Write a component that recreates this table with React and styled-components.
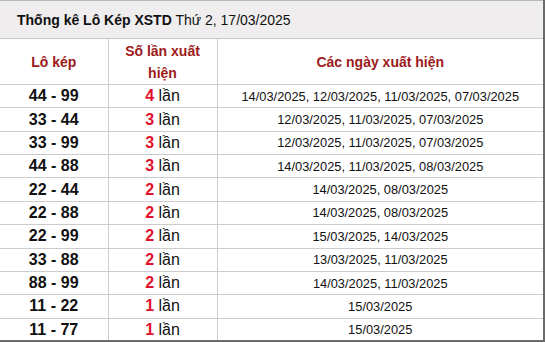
import React from "react";
import styled, { createGlobalStyle } from "styled-components";

const rows = [
	{ pair: "44 - 99", count: 4, dates: ["14/03/2025", "12/03/2025", "11/03/2025", "07/03/2025"] },
	{ pair: "33 - 44", count: 3, dates: ["12/03/2025", "11/03/2025", "07/03/2025"] },
	{ pair: "33 - 99", count: 3, dates: ["12/03/2025", "11/03/2025", "07/03/2025"] },
	{ pair: "44 - 88", count: 3, dates: ["14/03/2025", "11/03/2025", "08/03/2025"] },
	{ pair: "22 - 44", count: 2, dates: ["14/03/2025", "08/03/2025"] },
	{ pair: "22 - 88", count: 2, dates: ["14/03/2025", "08/03/2025"] },
	{ pair: "22 - 99", count: 2, dates: ["15/03/2025", "14/03/2025"] },
	{ pair: "33 - 88", count: 2, dates: ["13/03/2025", "11/03/2025"] },
	{ pair: "88 - 99", count: 2, dates: ["14/03/2025", "11/03/2025"] },
	{ pair: "11 - 22", count: 1, dates: ["15/03/2025"] },
	{ pair: "11 - 77", count: 1, dates: ["15/03/2025"] },
];

const App = () => {
	return (
		<>
			<GlobalStyle />
			<Wrapper>
				<Table>
					<colgroup>
						<col style={{ width: 108 }} />
						<col style={{ width: 109 }} />
						<col />
					</colgroup>
					<thead>
						<tr>
							<Caption colSpan={3}>
								<b>Thống kê Lô Kép XSTD</b> Thứ 2, 17/03/2025
							</Caption>
						</tr>
						<tr>
							<HeadCell>Lô kép</HeadCell>
							<HeadCell>Số lần xuất hiện</HeadCell>
							<HeadCell>Các ngày xuất hiện</HeadCell>
						</tr>
					</thead>
					<tbody>
						{rows.map(r => (
							<Row key={r.pair}>
								<PairCell>{r.pair}</PairCell>
								<CountCell>
									<Count>{r.count}</Count> lần
								</CountCell>
								<DateCell>{r.dates.join(", ")}</DateCell>
							</Row>
						))}
					</tbody>
				</Table>
			</Wrapper>
		</>
	);
};

export default App;

const GlobalStyle = createGlobalStyle`
	body {
		margin: 0;
		background: #fff;
		font-family: "Liberation Sans", Arial, sans-serif;
	}
`;

const Wrapper = styled.div`
	width: 545px;
	height: 343px;
	overflow: hidden;
`;

const Table = styled.table`
	width: 545px;
	border-collapse: collapse;
	table-layout: fixed;
	border-right: 2px solid #6b6b6b;
	border-bottom: 2px solid #6b6b6b;
	color: #111;
`;

const Caption = styled.th`
	height: 37px;
	padding: 0 0 0 17px;
	text-align: left;
	background: #efeded;
	border-top: 1px solid #b8b8b8;
	border-bottom: 1px solid #c8c8c8;
	font-size: 14px;
	font-weight: normal;
	color: #111;

	b {
		font-weight: bold;
	}
`;

const HeadCell = styled.th`
	height: 45px;
	padding: 0 6px;
	border: 1px solid #cccccc;
	border-left: none;
	font-size: 14px;
	line-height: 22px;
	font-weight: bold;
	color: #9c1a1a;
	text-align: center;
`;

const Row = styled.tr`
	height: 23.36px;
`;

const Cell = styled.td`
	padding: 0;
	border: 1px solid #cccccc;
	border-left: none;
	text-align: center;
	vertical-align: middle;
`;

const PairCell = styled(Cell)`
	font-size: 16px;
	font-weight: bold;
`;

const CountCell = styled(Cell)`
	font-size: 16px;
`;

const Count = styled.span`
	color: #e0112b;
	font-weight: bold;
`;

const DateCell = styled(Cell)`
	font-size: 12.85px;
`;
